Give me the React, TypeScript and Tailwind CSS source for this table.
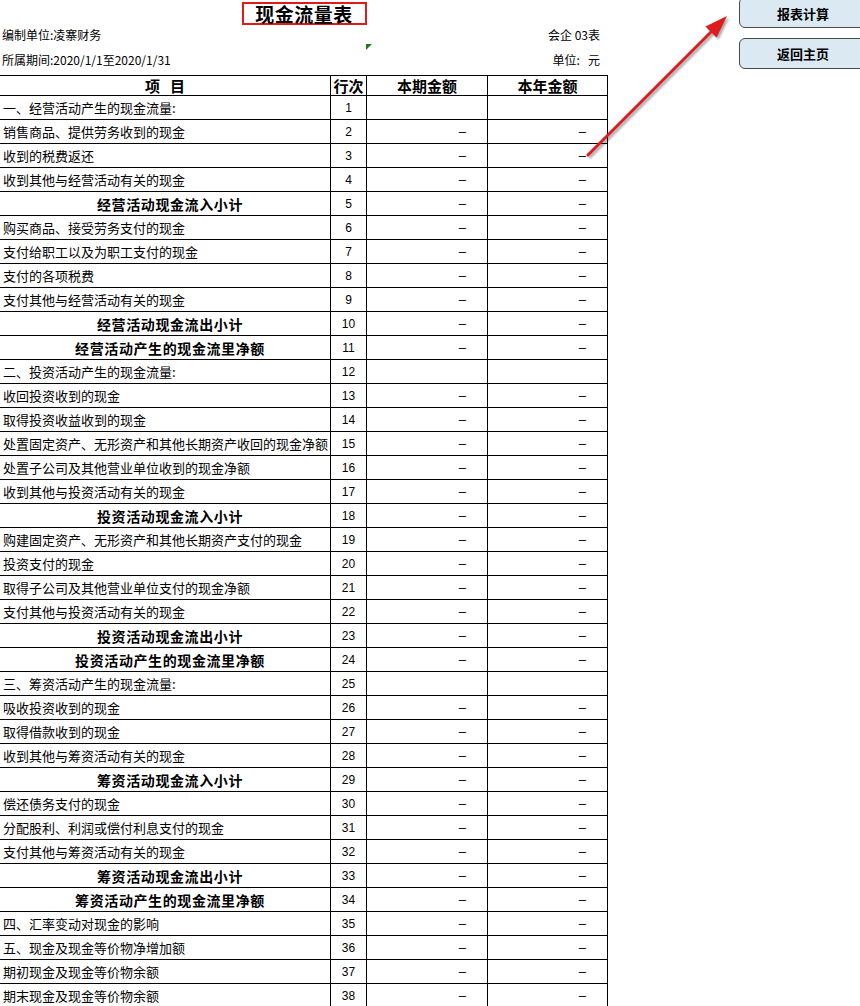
import React from "react";

type Row = { no: number; name: string; kind: "section" | "item" | "total"; dash: boolean };

const rows: Row[] = [
  { no: 1, name: "一、经营活动产生的现金流量:", kind: "section", dash: false },
  { no: 2, name: "销售商品、提供劳务收到的现金", kind: "item", dash: true },
  { no: 3, name: "收到的税费返还", kind: "item", dash: true },
  { no: 4, name: "收到其他与经营活动有关的现金", kind: "item", dash: true },
  { no: 5, name: "经营活动现金流入小计", kind: "total", dash: true },
  { no: 6, name: "购买商品、接受劳务支付的现金", kind: "item", dash: true },
  { no: 7, name: "支付给职工以及为职工支付的现金", kind: "item", dash: true },
  { no: 8, name: "支付的各项税费", kind: "item", dash: true },
  { no: 9, name: "支付其他与经营活动有关的现金", kind: "item", dash: true },
  { no: 10, name: "经营活动现金流出小计", kind: "total", dash: true },
  { no: 11, name: "经营活动产生的现金流里净额", kind: "total", dash: true },
  { no: 12, name: "二、投资活动产生的现金流量:", kind: "section", dash: false },
  { no: 13, name: "收回投资收到的现金", kind: "item", dash: true },
  { no: 14, name: "取得投资收益收到的现金", kind: "item", dash: true },
  { no: 15, name: "处置固定资产、无形资产和其他长期资产收回的现金净额", kind: "item", dash: true },
  { no: 16, name: "处置子公司及其他营业单位收到的现金净额", kind: "item", dash: true },
  { no: 17, name: "收到其他与投资活动有关的现金", kind: "item", dash: true },
  { no: 18, name: "投资活动现金流入小计", kind: "total", dash: true },
  { no: 19, name: "购建固定资产、无形资产和其他长期资产支付的现金", kind: "item", dash: true },
  { no: 20, name: "投资支付的现金", kind: "item", dash: true },
  { no: 21, name: "取得子公司及其他营业单位支付的现金净额", kind: "item", dash: true },
  { no: 22, name: "支付其他与投资活动有关的现金", kind: "item", dash: true },
  { no: 23, name: "投资活动现金流出小计", kind: "total", dash: true },
  { no: 24, name: "投资活动产生的现金流里净额", kind: "total", dash: true },
  { no: 25, name: "三、筹资活动产生的现金流量:", kind: "section", dash: false },
  { no: 26, name: "吸收投资收到的现金", kind: "item", dash: true },
  { no: 27, name: "取得借款收到的现金", kind: "item", dash: true },
  { no: 28, name: "收到其他与筹资活动有关的现金", kind: "item", dash: true },
  { no: 29, name: "筹资活动现金流入小计", kind: "total", dash: true },
  { no: 30, name: "偿还债务支付的现金", kind: "item", dash: true },
  { no: 31, name: "分配股利、利润或偿付利息支付的现金", kind: "item", dash: true },
  { no: 32, name: "支付其他与筹资活动有关的现金", kind: "item", dash: true },
  { no: 33, name: "筹资活动现金流出小计", kind: "total", dash: true },
  { no: 34, name: "筹资活动产生的现金流里净额", kind: "total", dash: true },
  { no: 35, name: "四、汇率变动对现金的影响", kind: "item", dash: true },
  { no: 36, name: "五、现金及现金等价物净增加额", kind: "item", dash: true },
  { no: 37, name: "期初现金及现金等价物余额", kind: "item", dash: true },
  { no: 38, name: "期末现金及现金等价物余额", kind: "item", dash: true },
];

const cell = "border-r border-b border-black flex items-center";

export default function App() {
  return (
    <div className="relative w-[860px] h-[1006px] overflow-hidden bg-white text-black font-['Noto_Sans_CJK_SC','Liberation_Sans',sans-serif]">
      <div className="flex">
        {/* sheet */}
        <div className="w-[608px] shrink-0">
          <div className="relative h-[75px]">
            <div className="flex justify-center pt-[2px]">
              <div className="h-[23px] w-[125px] border-[2px] border-[#e11b1b] flex items-center justify-center text-[19px] font-bold leading-none tracking-[0.5px]">
                现金流量表
              </div>
            </div>
            <div className="h-[20px] flex items-center justify-between pl-[2px] pr-[8px] text-[12px] leading-none">
              <span>编制单位:凌寨财务</span>
              <span>会企 03表</span>
            </div>
            <div className="mt-[5px] h-[20px] flex items-center justify-between pl-[2px] pr-[8px] text-[12px] leading-none">
              <span>所属期间:2020/1/1至2020/1/31</span>
              <span>单位:&nbsp;&nbsp;&nbsp;元</span>
            </div>
            <div className="absolute left-[366px] top-[44px] w-0 h-0 border-t-[6px] border-t-[#1f7a1f] border-r-[6px] border-r-transparent" />
          </div>

          <div className="grid grid-cols-[331px_36px_121px_120px] border-t border-black">
            <div className={`${cell} h-[20px] justify-center text-[15px] font-bold leading-none`}>项&nbsp;&nbsp;&nbsp;目</div>
            <div className={`${cell} h-[20px] justify-center text-[15px] font-bold leading-none`}>行次</div>
            <div className={`${cell} h-[20px] justify-center text-[15px] font-bold leading-none`}>本期金额</div>
            <div className={`${cell} h-[20px] justify-center text-[15px] font-bold leading-none`}>本年金额</div>
            {rows.map((r) => (
              <React.Fragment key={r.no}>
                <div
                  className={`${cell} h-[24px] whitespace-nowrap overflow-hidden leading-none ${
                    r.kind === "total"
                      ? "justify-center pl-[10px] text-[14px] font-bold tracking-[0.6px]"
                      : "pl-[3px] text-[13px]"
                  }`}
                >
                  {r.name}
                </div>
                <div className={`${cell} h-[24px] justify-center text-[12px] leading-none font-['Liberation_Sans',sans-serif]`}>{r.no}</div>
                <div className={`${cell} h-[24px] justify-end pr-[21px] text-[13px] leading-none font-['Liberation_Sans',sans-serif]`}>{r.dash ? "–" : ""}</div>
                <div className={`${cell} h-[24px] justify-end pr-[21px] text-[13px] leading-none font-['Liberation_Sans',sans-serif]`}>{r.dash ? "–" : ""}</div>
              </React.Fragment>
            ))}
          </div>
        </div>

        {/* buttons */}
        <div className="ml-[131px] flex flex-col gap-[10px] -mt-[3px]">
          <button className="w-[128px] h-[31px] rounded-[6px] border border-[#4a4a4a] bg-[#dae9f2] text-[13px] font-bold leading-none pt-[2px]">
            报表计算
          </button>
          <button className="w-[128px] h-[31px] rounded-[6px] border border-[#4a4a4a] bg-[#dae9f2] text-[13px] font-bold leading-none">
            返回主页
          </button>
        </div>
      </div>

      {/* red arrow overlay */}
      <svg
        className="absolute left-0 top-0 pointer-events-none drop-shadow-[2px_2px_1px_rgba(0,0,0,0.35)]"
        width="860"
        height="1006"
        viewBox="0 0 860 1006"
      >
        <line x1="588" y1="155" x2="712" y2="31" stroke="#e01b1b" strokeWidth="3" strokeLinecap="round" />
        <polygon points="727,16 705.5,26.5 716.5,37.5" fill="#e01b1b" />
      </svg>
    </div>
  );
}
